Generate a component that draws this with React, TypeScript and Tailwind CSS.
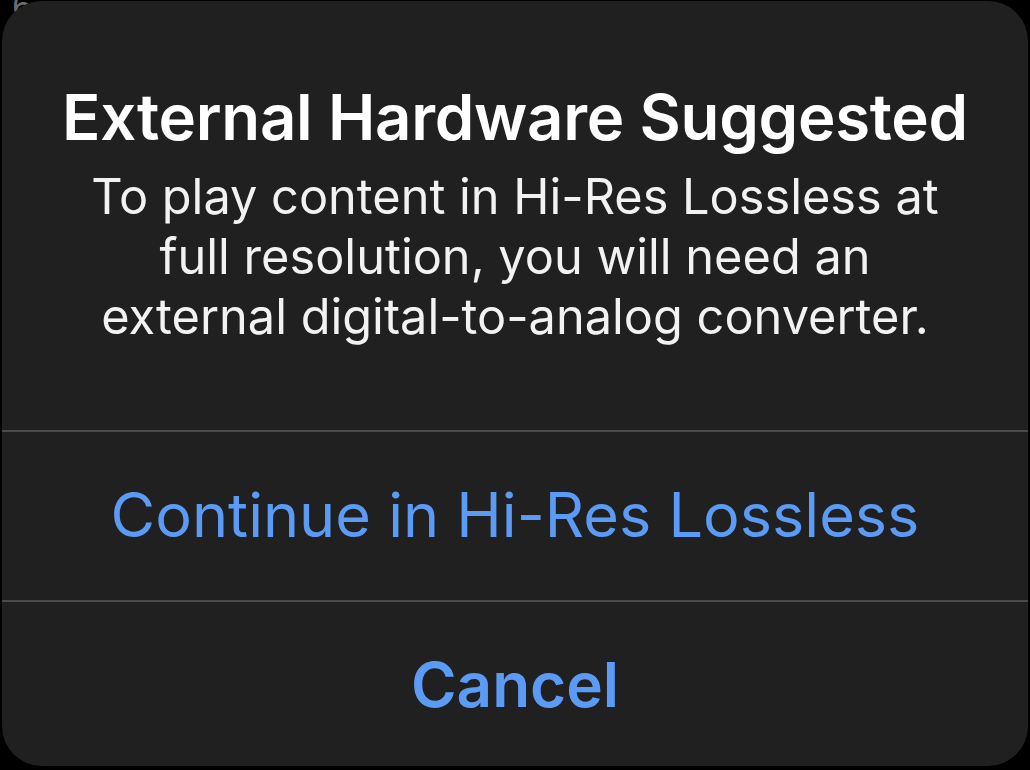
export default function App() {
  return (
    <div className="relative w-[1030px] h-[770px] bg-black overflow-hidden" style={{ fontFamily: "Inter, 'Noto Sans', sans-serif" }}>
      <span className="absolute left-[12px] top-[-20px] text-[34px] text-[#6b6b6b]">6</span>
      <div className="relative ml-[2px] mt-[1px] w-[1026px] h-[765px] rounded-[40px] bg-[#202020] flex flex-col">
        <div className="h-[429px] flex flex-col items-center pt-[81px] text-white">
          <h1 className="text-[63.5px] leading-[70px] font-semibold tracking-[-0.3px] whitespace-nowrap">External Hardware Suggested</h1>
          <p className="mt-[15px] text-[48.7px] leading-[60px] text-center text-[#f2f2f2] whitespace-nowrap">
            To play content in Hi-Res Lossless at
            <br />
            full resolution, you will need an
            <br />
            external digital-to-analog converter.
          </p>
        </div>
        <div className="h-[2px] bg-[#4b4b4d]" />
        <button className="h-[168px] flex items-center justify-center text-[61.2px] text-[#5b9af5]">
          Continue in Hi-Res Lossless
        </button>
        <div className="h-[2px] bg-[#4b4b4d]" />
        <button className="flex-1 flex items-center justify-center text-[62px] font-semibold text-[#5b9af5]">
          Cancel
        </button>
      </div>
    </div>
  );
}
